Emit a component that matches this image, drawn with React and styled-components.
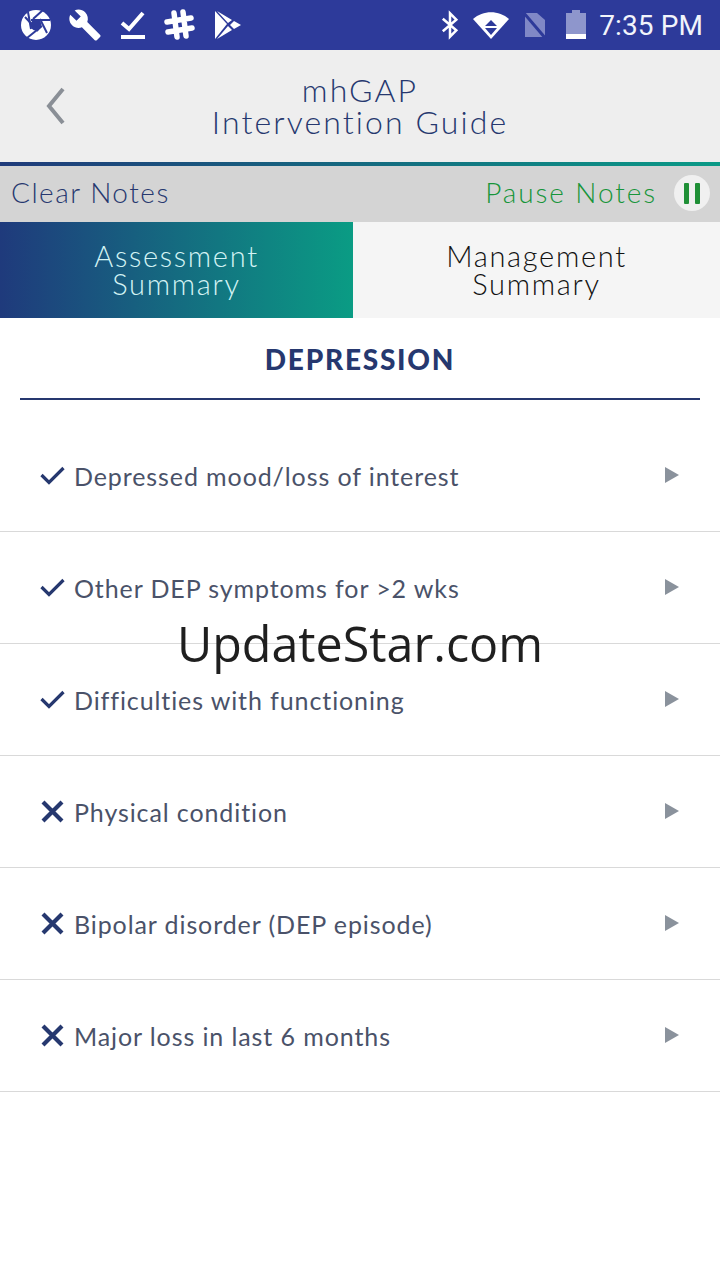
import styled, { createGlobalStyle } from "styled-components";

const GlobalStyle = createGlobalStyle`
    html, body { margin: 0; padding: 0; background: #fff; }
    * { box-sizing: border-box; }
`

const Page = styled.div`
    position: relative;
    width: 720px;
    height: 1280px;
    overflow: hidden;
    background: #fff;
    font-family: "Lato", "Liberation Sans", sans-serif;
`

const StatusBar = styled.div`
    height: 50px;
    background: #2d3a9a;
    display: flex;
    align-items: center;
    justify-content: space-between;
    padding: 0 17px 0 20px;
    color: #fff;
`

const StatusGroup = styled.div`
    display: flex;
    align-items: center;
    gap: ${(p) => p.$gap}px;
`

const Clock = styled.span`
    font-family: "Roboto", sans-serif;
    font-size: 28px;
    font-weight: 400;
    letter-spacing: 0.1px;
    color: #f2f4fb;
    margin-left: -1px;
`

const Header = styled.div`
    height: 112px;
    background: #eeeeee;
    display: flex;
    align-items: center;
    justify-content: center;
    position: relative;
`

const BackButton = styled.svg`
    position: absolute;
    left: 44px;
    top: 37px;
`

const Title = styled.div`
    font-size: 32px;
    line-height: 32px;
    font-weight: 300;
    letter-spacing: 2.1px;
    color: #26386f;
    text-align: center;
`

const GradientLine = styled.div`
    height: 4px;
    background: linear-gradient(90deg, #1f3a7a, #0a9a86);
`

const NotesBar = styled.div`
    height: 56px;
    background: #d4d4d4;
    display: flex;
    align-items: center;
    justify-content: space-between;
    padding: 0 10px 4px 11px;
`

const ClearNotes = styled.span`
    font-size: 28px;
    font-weight: 300;
    letter-spacing: 1.5px;
    color: #26386f;
`

const PauseGroup = styled.div`
    display: flex;
    align-items: center;
    gap: 17px;
`

const PauseNotes = styled.span`
    font-size: 28px;
    font-weight: 300;
    letter-spacing: 1.9px;
    color: #17953a;
`

const PauseButton = styled.div`
    width: 36px;
    height: 36px;
    border-radius: 50%;
    background: #f0f0f0;
    display: flex;
    align-items: center;
    justify-content: center;
    gap: 6px;
    margin-top: 2px;
`

const PauseBar = styled.span`
    width: 5px;
    height: 21px;
    border-radius: 1px;
    background: #1f8f36;
`

const Tabs = styled.div`
    height: 96px;
    display: grid;
    grid-template-columns: 353px 1fr;
`

const Tab = styled.div`
    display: flex;
    align-items: center;
    justify-content: center;
    text-align: center;
    font-size: 29px;
    line-height: 28px;
    font-weight: 300;
    letter-spacing: 1.7px;
    color: ${(p) => (p.$active ? "#d3f3f4" : "#111111")};
    background: ${(p) => (p.$active ? "linear-gradient(90deg, #1f3a7c, #0a9c84)" : "#f5f5f5")};
`

const Section = styled.div`
    margin: 0 20px 20px;
    height: 82px;
    border-bottom: 2px solid #26386f;
    display: flex;
    align-items: center;
    justify-content: center;
    padding-top: 2px;
    font-size: 28px;
    font-weight: 900;
    letter-spacing: 1.75px;
    color: #26386f;
`

const Row = styled.div`
    height: 112px;
    border-bottom: 1px solid #d9d9d9;
    display: flex;
    align-items: center;
    padding: 0 41px 0 40px;
`

const RowMark = styled.svg`
    flex: none;
    margin-right: 9px;
`

const RowText = styled.span`
    flex: 1;
    font-size: 25px;
    font-weight: 400;
    letter-spacing: 0.9px;
    color: #4a5269;
`

const Arrow = styled.span`
    width: 0;
    height: 0;
    margin-top: -1px;
    border-style: solid;
    border-width: 8px 0 8px 14px;
    border-color: transparent transparent transparent #8a929c;
`

const Watermark = styled.div`
    position: absolute;
    left: 0;
    right: 0;
    top: 609px;
    text-align: center;
    font-family: "Open Sans", sans-serif;
    font-size: 48.4px;
    line-height: 68px;
    color: #1f1f1f;
`

const Check = () => (
    <RowMark width="25" height="24" viewBox="0 0 25 24" fill="none" stroke="#26386f" strokeWidth="3.2">
        <path d="M1.5 11 L9 18.5 L23.5 4" />
    </RowMark>
)

const Cross = () => (
    <RowMark width="25" height="24" viewBox="0 0 25 24" fill="none" stroke="#26386f" strokeWidth="4.2">
        <path d="M3 2 L22 21 M22 2 L3 21" />
    </RowMark>
)

const rows = [
    { label: "Depressed mood/loss of interest", ok: true },
    { label: "Other DEP symptoms for >2 wks", ok: true },
    { label: "Difficulties with functioning", ok: true },
    { label: "Physical condition", ok: false },
    { label: "Bipolar disorder (DEP episode)", ok: false },
    { label: "Major loss in last 6 months", ok: false },
]

export default function App() {
    return (
        <Page>
            <GlobalStyle />
            <StatusBar>
                <StatusGroup $gap={16}>
                    {/* aperture */}
                    <svg width="32" height="32" viewBox="0 0 32 32">
                        <circle cx="16" cy="16" r="15" fill="#fff" />
                        <g stroke="#2d3a9a" strokeWidth="2" fill="none">
                            <path d="M13 10 L23 1" />
                            <path d="M20 10 L27 24" />
                            <path d="M22 17 L7 29" />
                            <path d="M18 22 L5 8" />
                            <path d="M11 20 L8 3" />
                            <path d="M11 11 L30 11" />
                        </g>
                        <circle cx="16" cy="16" r="5.5" fill="#2d3a9a" />
                    </svg>
                    {/* wrench */}
                    <svg width="34" height="34" viewBox="0 0 24 24">
                        <path d="M22.7 19l-9.1-9.1c.9-2.3.4-5-1.5-6.9-2-2-5-2.4-7.4-1.3L9 6 6 9 1.6 4.7C.4 7.1.9 10.1 2.9 12.1c1.9 1.9 4.6 2.4 6.9 1.5l9.1 9.1c.4.4 1 .4 1.4 0l2.3-2.3c.5-.4.5-1.1.1-1.4z" fill="#fff" />
                    </svg>
                    {/* task done */}
                    <svg width="26" height="30" viewBox="0 0 26 30" fill="none" stroke="#fff" style={{ marginLeft: 2 }}>
                        <path d="M2 13 L9 19 L23 3" strokeWidth="4" />
                        <path d="M1 27 L25 27" strokeWidth="4" />
                    </svg>
                    {/* hash */}
                    <svg width="34" height="34" viewBox="0 0 34 34" fill="none" stroke="#fff" strokeWidth="5.5" strokeLinecap="round">
                        <path d="M12 5 L15 29 M21 4 L24 28 M5 14 L29 10 M6 24 L30 20" />
                    </svg>
                    {/* play store */}
                    <svg width="28" height="30" viewBox="0 0 28 30" style={{ marginLeft: 2 }}>
                        <path d="M1 1 L13 14 L1 29 Z" fill="#fff" />
                        <path d="M3 1 L18 10 L14 13 Z M3 29 L18 20 L14 16 Z M20 11 L27 15 L20 19 L16 15 Z" fill="#fff" />
                    </svg>
                </StatusGroup>
                <StatusGroup $gap={14}>
                    {/* bluetooth */}
                    <svg width="18" height="30" viewBox="0 0 20 30" fill="none" stroke="#fff" strokeWidth="2.8">
                        <path d="M2 8 L17 21 L10 28 L10 2 L17 9 L2 22" />
                    </svg>
                    {/* wifi */}
                    <svg width="36" height="28" viewBox="0 0 36 28">
                        <path d="M0 8 C10 -1 26 -1 36 8 L18 28 Z" fill="#fff" />
                        <path d="M18 9 L24 15 L12 15 Z M12 17 L24 17 L18 24 Z" fill="#2d3a9a" />
                    </svg>
                    {/* no sim */}
                    <svg width="24" height="28" viewBox="0 0 24 28">
                        <path d="M2 2 L14 2 L22 9 L22 26 L2 26 Z" fill="#8088c6" />
                        <path d="M0 1 L23 28" stroke="#2d3a9a" strokeWidth="3" />
                    </svg>
                    {/* battery */}
                    <svg width="20" height="30" viewBox="0 0 20 30" style={{ marginLeft: 5 }}>
                        <path d="M6 0 L14 0 L14 3 L20 3 L20 24 L0 24 L0 3 L6 3 Z" fill="#8e96cc" />
                        <rect x="0" y="24" width="20" height="5" fill="#fff" />
                    </svg>
                    <Clock>7:35 PM</Clock>
                </StatusGroup>
            </StatusBar>
            <Header>
                <BackButton width="24" height="38" viewBox="0 0 24 38" fill="none" stroke="#8a8f96" strokeWidth="4">
                    <path d="M19 2 L5 19 L19 36" />
                </BackButton>
                <Title>mhGAP<br />Intervention Guide</Title>
            </Header>
            <GradientLine />
            <NotesBar>
                <ClearNotes>Clear Notes</ClearNotes>
                <PauseGroup>
                    <PauseNotes>Pause Notes</PauseNotes>
                    <PauseButton>
                        <PauseBar />
                        <PauseBar />
                    </PauseButton>
                </PauseGroup>
            </NotesBar>
            <Tabs>
                <Tab $active>Assessment<br />Summary</Tab>
                <Tab>Management<br />Summary</Tab>
            </Tabs>
            <Section>DEPRESSION</Section>
            {rows.map((row) => (
                <Row key={row.label}>
                    {row.ok ? <Check /> : <Cross />}
                    <RowText>{row.label}</RowText>
                    <Arrow />
                </Row>
            ))}
            <Watermark>UpdateStar.com</Watermark>
        </Page>
    )
}
